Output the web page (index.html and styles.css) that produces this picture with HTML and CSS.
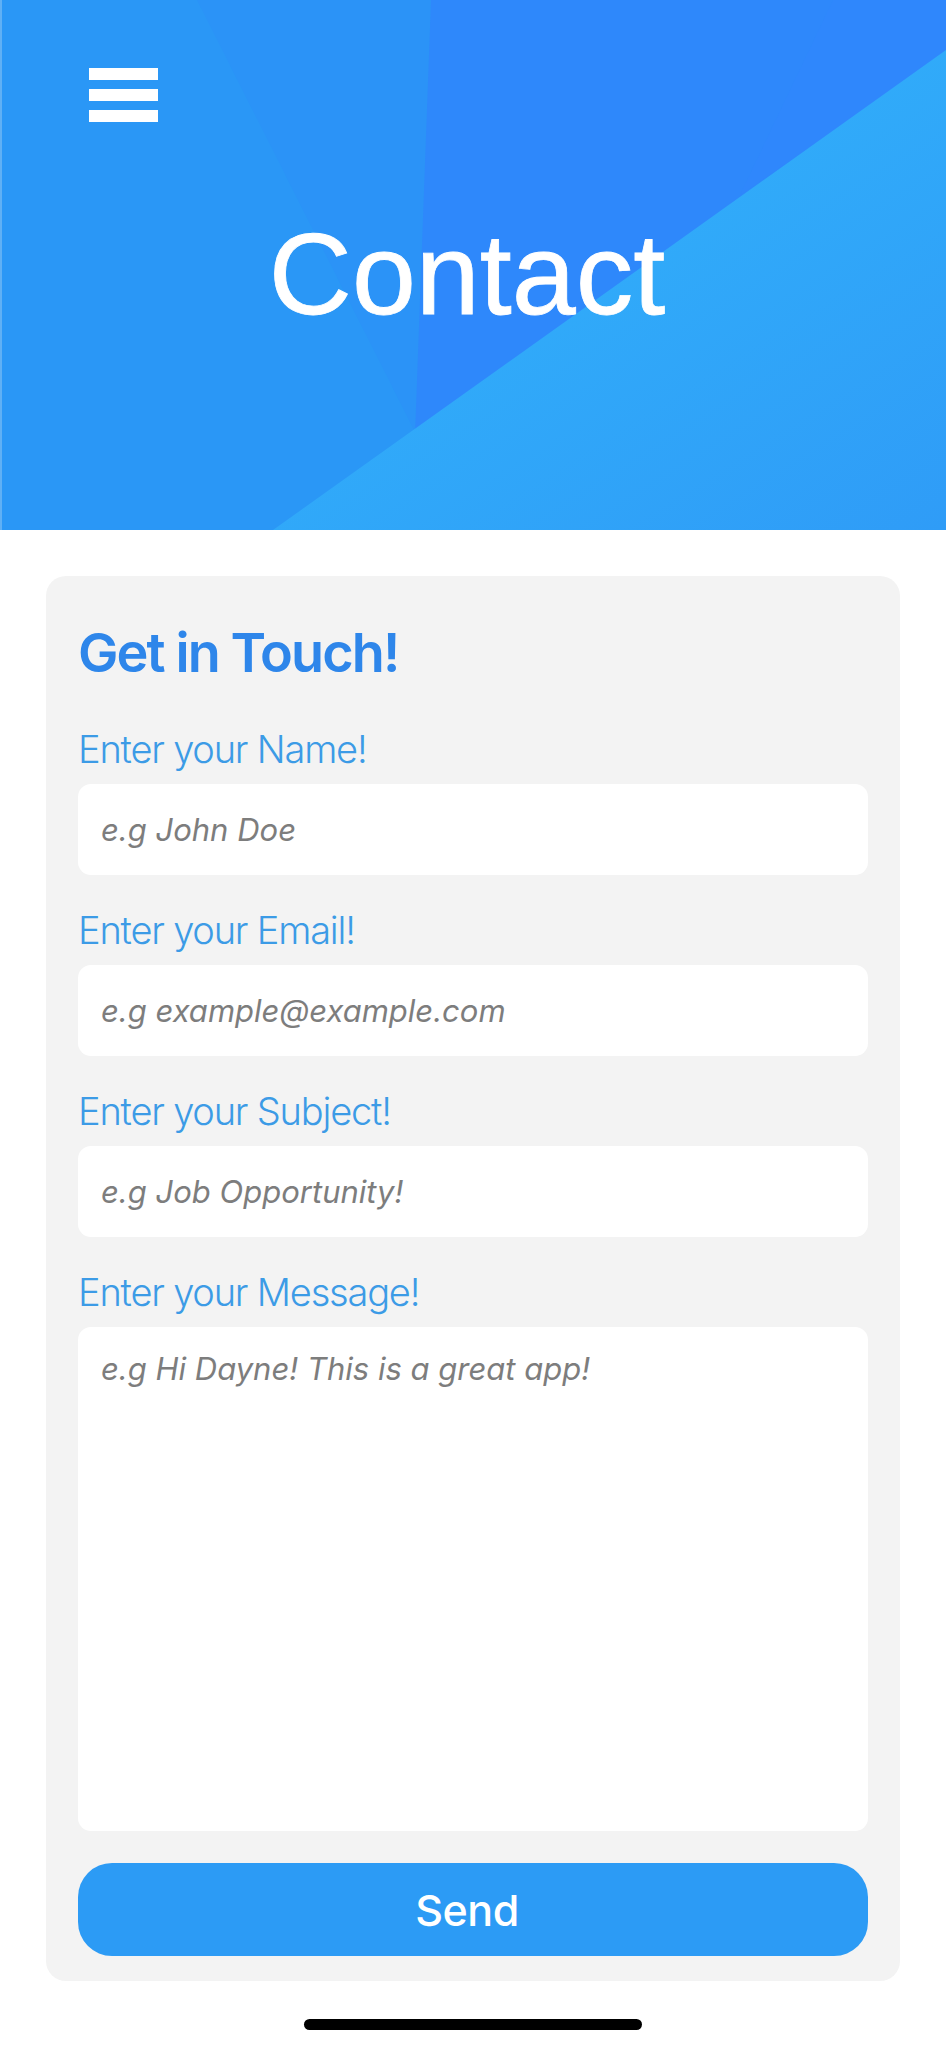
FILE: index.html
```html
<!DOCTYPE html>
<html lang="en">
<head>
<meta charset="utf-8">
<title>Contact</title>
<link rel="stylesheet" href="styles.css">
</head>
<body>
<header class="hero">
  <svg class="hero-bg" viewBox="0 0 946 530" preserveAspectRatio="none" aria-hidden="true">
    <defs>
      <linearGradient id="lightg" x1="0.3" y1="0.2" x2="1" y2="1">
        <stop offset="0" stop-color="#31b0fa"/>
        <stop offset="1" stop-color="#2f9cf7"/>
      </linearGradient>
    </defs>
    <rect x="0" y="0" width="946" height="530" fill="#2a97f6"/>
    <polygon points="197,0 946,0 946,530 415,432" fill="#2b93f7"/>
    <polygon points="431,0 946,0 946,60 415,435" fill="#2e88fb"/>
    <polygon points="833,0 946,0 946,55 740,195" fill="#2f87fc"/>
    <polygon points="273,530 946,50 946,530" fill="url(#lightg)"/>
    <rect x="0" y="0" width="2" height="530" fill="#5fb0f5"/>
  </svg>
  <button class="menu" aria-label="Menu">
    <span class="bar"></span><span class="bar"></span><span class="bar"></span>
  </button>
  <h1 class="title">Contact</h1>
</header>

<main class="card">
  <h2 class="card-title">Get in Touch!</h2>
  <form class="form">
    <label class="field">
      <span class="label">Enter your Name!</span>
      <input class="input" type="text" placeholder="e.g John Doe">
    </label>
    <label class="field">
      <span class="label">Enter your Email!</span>
      <input class="input" type="email" placeholder="e.g example@example.com">
    </label>
    <label class="field">
      <span class="label">Enter your Subject!</span>
      <input class="input" type="text" placeholder="e.g Job Opportunity!">
    </label>
    <label class="field">
      <span class="label">Enter your Message!</span>
      <textarea class="input textarea" placeholder="e.g Hi Dayne! This is a great app!"></textarea>
    </label>
    <button class="send" type="button">Send</button>
  </form>
</main>

<div class="home-indicator"></div>
</body>
</html>
```

FILE: styles.css
```css
* { box-sizing: border-box; }

html, body {
  margin: 0;
  padding: 0;
  background: #ffffff;
}

body {
  width: 946px;
  font-family: Inter, "Liberation Sans", Arial, sans-serif;
}

.hero {
  position: relative;
  height: 530px;
  overflow: hidden;
  display: flex;
  flex-direction: column;
}

.hero-bg {
  position: absolute;
  left: 0;
  top: 0;
  width: 100%;
  height: 100%;
  display: block;
}

.menu {
  position: relative;
  margin: 68px 0 0 89px;
  padding: 0;
  border: 0;
  background: transparent;
  width: 69px;
  display: flex;
  flex-direction: column;
  gap: 9px;
}

.bar {
  display: block;
  width: 69px;
  height: 12px;
  background: #ffffff;
}

.title {
  position: relative;
  margin: 87px 0 0 0;
  padding-right: 12px;
  font-family: "Liberation Sans", Arial, sans-serif;
  font-weight: 400;
  font-size: 115px;
  line-height: 130px;
  color: #ffffff;
  text-align: center;
  letter-spacing: 0;
  -webkit-text-stroke: 0.8px #ffffff;
}

.card {
  margin: 46px 0 0 46px;
  width: 854px;
  height: 1405px;
  background: #f3f3f3;
  border-radius: 20px;
  padding: 43px 32px 25px 32px;
}

.card-title {
  margin: 0 0 39px 0;
  font-size: 54px;
  line-height: 68px;
  font-weight: 600;
  color: #2e86ea;
  letter-spacing: -1.9px;
}

.form {
  display: flex;
  flex-direction: column;
  gap: 32px;
}

.field {
  display: flex;
  flex-direction: column;
  gap: 12px;
}

.label {
  font-size: 38px;
  line-height: 46px;
  font-weight: 300;
  color: #3c9be6;
  letter-spacing: -1.2px;
}

.input {
  display: block;
  width: 790px;
  height: 91px;
  border: 0;
  outline: 0;
  border-radius: 13px;
  background: #ffffff;
  padding: 0 23px;
  font-family: Inter, "Liberation Sans", Arial, sans-serif;
  font-size: 31px;
  color: #333;
}

.input::placeholder {
  color: #7d7d7d;
  font-style: italic;
  font-weight: 450;
  opacity: 1;
}

.textarea {
  height: 504px;
  padding: 23px 23px;
  line-height: 37px;
  resize: none;
}

.send {
  display: block;
  width: 790px;
  height: 93px;
  border: 0;
  border-radius: 34px;
  background: #2c9bf5;
  color: #ffffff;
  font-family: Inter, "Liberation Sans", Arial, sans-serif;
  font-size: 43px;
  font-weight: 500;
  letter-spacing: -0.5px;
  padding: 0 12px 0 0;
}

.home-indicator {
  width: 338px;
  height: 11px;
  margin: 38px auto 0 auto;
  border-radius: 6px;
  background: #000000;
}
```
